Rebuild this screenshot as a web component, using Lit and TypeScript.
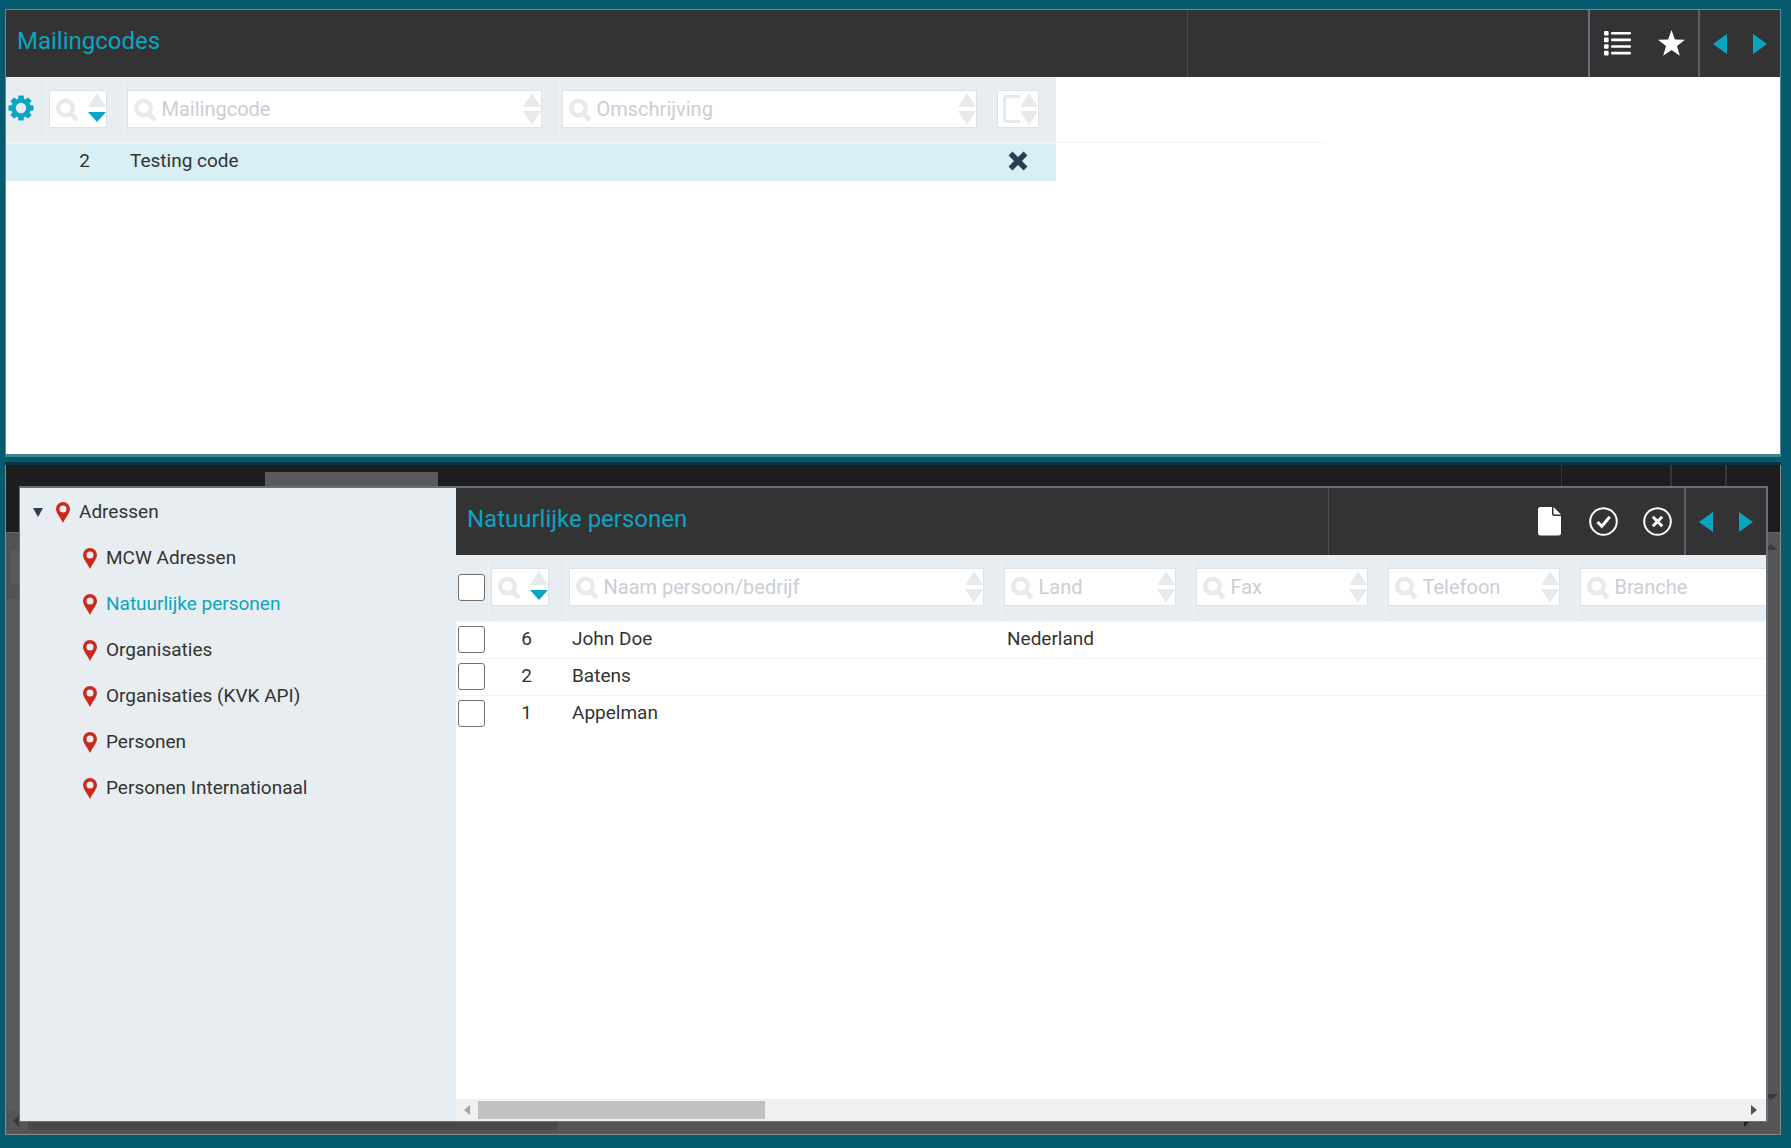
import { LitElement, html, css, svg, nothing } from "lit";
import { customElement, property } from "lit/decorators.js";
import { classMap } from "lit/directives/class-map.js";

const controls = css`
  * { box-sizing: border-box; }
  button { border: 0; padding: 0; margin: 0; background: none; font: inherit; color: inherit; cursor: pointer; display: grid; place-items: center; }
  svg { display: block; }
  input { font: inherit; }
`;

@customElement("column-filter")
class ColumnFilter extends LitElement {
  @property() label = "";
  @property() kind = "text";
  @property({ type: Boolean }) sorted = false;
  @property({ type: Boolean }) unnamed = false;

  static styles = [controls, css`
    :host { display: block; }
    .box { display: flex; height: 38px; border: 1px solid #dde2e6; background: #fff; overflow: hidden; }
    .glass { flex: none; width: 22px; margin: 7px 0 0 6px; }
    .field { flex: 1; min-width: 0; width: 0; height: 36px; border: 0; padding: 0 0 0 6px; outline: 0; background: none; color: #333; font-size: 20px; font-weight: 400; }
    .field::placeholder { color: #c9ced6; opacity: 1; }
    .arrows { flex: none; width: 18px; display: flex; flex-direction: column; gap: 4px; padding-top: 2px; }
    .tick { flex: 1; min-width: 0; display: flex; padding: 4px 0 0 5px; overflow: hidden; }
    .tick input { appearance: none; margin: 0; flex: none; width: 28px; height: 28px; border: 3px solid #e7e9eb; border-radius: 4px; }
  `];

  render() {
    const off = "#e7e9eb";
    return html`<div class="box">
      ${this.kind === "tick"
        ? html`<label class="tick"><input type="checkbox" aria-label=${this.label}></label>`
        : html`<svg class="glass" width="22" height="23" viewBox="0 0 22 23" fill="none" stroke=${off}>
            <circle cx="9.5" cy="10" r="7.3" stroke-width="4.4"/><path d="M15 16l6 6" stroke-width="5"/>
          </svg>
          <input class="field" type="text" aria-label=${this.label} placeholder=${this.unnamed ? nothing : this.label}>`}
      <span class="arrows">
        <button aria-label="Oplopend"><svg width="18" height="14" viewBox="0 0 18 14"><path d="M9 0l9 14H0z" fill=${off}/></svg></button>
        <button aria-label="Aflopend"><svg width="18" height="14" viewBox="0 0 18 14"><path d=${this.sorted ? "M0 1h18L9 11z" : "M0 0h18L9 14z"} fill=${this.sorted ? "#0aa5c3" : off}/></svg></button>
      </span>
    </div>`;
  }
}

const icons = {
  list: svg`<g fill="#fff">${[0, 1, 2, 3].map(i => svg`<rect x="1" y=${2 + i * 6.6} width="4.600" height="4.600" rx="1"/><rect x="8" y=${3 + i * 6.6} width="20" height="2.6" rx="1"/>`)}</g>`,
  star: svg`<path fill="#fff" d="M14.500 1l3.400 9.600 10.100.2-8 6.200 2.800 9.800-8.300-5.700-8.300 5.700 2.800-9.800-8-6.200 10.100-.2z"/>`,
  file: svg`<path fill="#fff" d="M5.500 0H17v6.500Q17 9 19.500 9H26v17q0 2.500-2.500 2.500h-18Q3 28.500 3 26V2.500Q3 0 5.500 0z"/><path fill="#fff" d="M18.500 0L26 7.500h-6q-1.500 0-1.500-1.500z"/>`,
  check: svg`<g fill="none" stroke="#fff"><circle cx="14.500" cy="14.500" r="13.300" stroke-width="2"/><path d="M8.500 15l4.300 4.300 8-9.500" stroke-width="3"/></g>`,
  cross: svg`<g fill="none" stroke="#fff"><circle cx="14.500" cy="14.500" r="13.300" stroke-width="2"/><path d="M9.800 9.800l9.400 9.400M19.200 9.800l-9.400 9.400" stroke-width="3"/></g>`,
};
type IconName = keyof typeof icons;

@customElement("title-bar")
class TitleBar extends LitElement {
  @property() heading = "";
  @property({ type: Array }) tools: [IconName, string][] = [];
  @property({ type: Boolean }) fenced = false;

  static styles = [controls, css`
    :host { display: block; }
    .bar { display: flex; height: 67px; background: #333; }
    h1 { flex: 1; margin: 0; padding: 15px 0 0 11px; font-size: 24px; line-height: 32px; font-weight: 400; color: #0aa5c3; }
    .side { flex: 0 0 33.4%; display: flex; justify-content: flex-end; border-left: 1px solid #4a4a4a; }
    .tools { display: flex; }
    .tools.fenced { border-left: 2px solid #667080; }
    .tools button { width: 54px; height: 67px; }
    .pager { display: flex; width: 82px; border-left: 2px solid #5a606a; }
    .pager button { flex: 1; height: 67px; }
  `];

  render() {
    return html`<header class="bar">
      <h1>${this.heading}</h1>
      <div class="side">
        <div class=${classMap({ tools: true, fenced: this.fenced })}>
          ${this.tools.map(([icon, label]) => html`<button aria-label=${label}><svg width="29" height="29" viewBox="0 0 29 29">${icons[icon]}</svg></button>`)}
        </div>
        <div class="pager">
          <button aria-label="Vorige"><svg width="14" height="20" viewBox="0 0 14 20"><path d="M14 0v20L0 10z" fill="#0aa5c3"/></svg></button>
          <button aria-label="Volgende"><svg width="14" height="20" viewBox="0 0 14 20"><path d="M0 0v20l14-10z" fill="#0aa5c3"/></svg></button>
        </div>
      </div>
    </header>`;
  }
}

const gear = html`<svg width="26" height="26" viewBox="0 0 26 26"><g fill="#0aa5c3">
  ${[0, 45, 90, 135].map(a => svg`<rect x="10.200" y="0.500" width="5.600" height="25" rx="1" transform="rotate(${a} 13 13)"/>`)}
  <circle cx="13" cy="13" r="9.800"/></g><circle cx="13" cy="13" r="5.200" fill="#e7edf0"/></svg>`;

const pin = html`<svg class="pin" width="14" height="21" viewBox="0 0 14 21"><path fill="#cb2a1b" fill-rule="evenodd" d="M7 0a7 7 0 0 1 7 7c0 4-4.500 8.500-7 14C4.500 15.500 0 11 0 7a7 7 0 0 1 7-7zm0 3.500a3.500 3.500 0 1 0 0 7 3.500 3.500 0 0 0 0-7z"/></svg>`;

const places = ["MCW Adressen", "Natuurlijke personen", "Organisaties", "Organisaties (KVK API)", "Personen", "Personen Internationaal"];
const people = [["6", "John Doe", "Nederland"], ["2", "Batens", ""], ["1", "Appelman", ""]];
const columns = ["Naam persoon/bedrijf", "Land", "Fax", "Telefoon", "Branche"];
const codeColumns = html`<colgroup><col class="c-pick"><col class="c-num"><col class="c-wide"><col class="c-wide"><col></colgroup>`;

@customElement("app-root")
class AppRoot extends LitElement {
  static styles = [controls, css`
    :host { display: flex; flex-direction: column; min-height: 100vh; padding: 9px 10px 13px 5px; box-sizing: border-box; background: #055a6e; color: #333; font: 19px/24px Roboto, "Liberation Sans", sans-serif; }
    .top { flex: 0 0 448px; border: 1px solid #5d8d99; border-bottom: 3px solid #3d8391; background: #fff; overflow: hidden; }
    table { border-collapse: collapse; table-layout: fixed; }
    th { height: 65px; padding: 0; background: #e7edf0; border-left: 1px solid #eef2f4; vertical-align: top; }
    th:first-child { border-left: 0; }
    th column-filter { margin: 13px 17px 0 2px; font-weight: 400; text-align: left; }
    td { height: 37px; padding: 0 0 2px 6px; border-top: 1px solid #f1f3f4; white-space: nowrap; }
    td.num { padding: 0 34px 2px 0; text-align: right; }
    .c-pick { width: 40px; }
    .c-num { width: 78px; }
    .c-wide { width: 435px; }
    .codes { width: 1050px; }
    .codes td { background: #d8eff5; border-color: #e9f4f6; }
    .codes th:last-child { border-left: 0; }
    .codes column-filter.last { margin-left: 3px; }
    .codeline { width: 1320px; border-bottom: 1px solid #f3f3f3; }
    .gear { margin: 18px 0 0 2px; }
    .codes td.x { padding-left: 14px; }
    .splitter { flex: none; height: 8px; background: #055a6e; border-bottom: 3px solid #0a3347; }
    .lower { flex: 1; display: grid; border: 1px solid #8a8a8a; border-top: 0; background: #5a5a5a; }
    .under, .dialog { grid-area: 1 / 1; min-width: 0; }
    .under { display: flex; flex-direction: column; }
    .underbar { display: flex; justify-content: space-between; height: 67px; padding: 7px 0 0 259px; background: #1d1d1d; }
    .tab { width: 173px; background: #5a5a5a; }
    .marks { display: flex; width: 219px; height: 61px; margin-top: -7px; border-left: 1px solid #333; }
    .marks i { width: 110px; border-right: 2px solid #33363c; }
    .marks i + i { width: 55px; }
    .underbody { flex: 1; display: flex; justify-content: space-between; border-top: 1px solid #666; }
    .underfilter { width: 14px; height: 66px; padding: 16px 0 0 4px; background: #515355; }
    .underfilter i { display: block; height: 36px; background: #5a5a5a; border: 1px solid #4f5052; }
    .rail { display: flex; flex-direction: column; justify-content: space-between; align-items: flex-start; padding: 11px 0 10px 5px; width: 21px; background: #565656; }
    .foot { display: flex; align-items: center; height: 24px; padding: 0 30px 3px 7px; background: #555; }
    .foot i { width: 530px; height: 18px; margin-left: 9px; margin-right: auto; background: #484848; }
    .dialog { display: flex; margin: 21px 12px 12px 13px; border: 2px solid #667080; border-width: 2px 2px 1px 1px; background: #fff; z-index: 1; }
    nav { flex: none; width: 436px; padding: 1px 0; background: #e7edf0; }
    ul { list-style: none; margin: 0; padding: 0; }
    nav a, .root { display: flex; align-items: center; height: 46px; gap: 9px; color: #333; text-decoration: none; }
    nav a { padding-left: 63px; }
    nav a.on { color: #0aa5c3; }
    .root { padding-left: 13px; }
    .root .pin { margin-left: 4px; }
    .main { flex: 1; min-width: 0; display: flex; flex-direction: column; }
    .scroll { flex: 1; overflow: hidden; }
    .persons { width: 1503px; }
    .persons .c-pick { width: 32px; }
    .c-mid { width: 192px; }
    .persons th { height: 66px; }
    .persons .pick { padding: 0 0 0 2px; text-align: left; vertical-align: middle; }
    .pick input { appearance: none; display: block; width: 27px; height: 27px; margin: 0; background: #fff; border: 1px solid #707070; border-radius: 3px; }
    .bar { display: flex; align-items: center; height: 22px; padding: 0 9px 0 8px; background: #f0f0f0; }
    .thumb { width: 22.2%; height: 18px; margin: 0 auto 0 8px; background: #c1c1c1; }
  `];

  render() {
    return html`
      <section class="top">
        <title-bar heading="Mailingcodes" fenced .tools=${[["list", "Lijst"], ["star", "Favoriet"]]}></title-bar>
        <div class="codeline">
          <table class="codes">
            ${codeColumns}
            <thead><tr>
              <th><button class="gear" aria-label="Instellingen">${gear}</button></th>
              <th><column-filter label="Nummer" unnamed sorted></column-filter></th>
              <th><column-filter label="Mailingcode"></column-filter></th>
              <th><column-filter label="Omschrijving"></column-filter></th>
              <th><column-filter class="last" kind="tick" label="Actief"></column-filter></th>
            </tr></thead>
          </table>
        </div>
        <table class="codes">
          ${codeColumns}
          <tbody><tr><td></td><td class="num">2</td><td>Testing code</td><td></td>
            <td class="x"><svg width="20" height="20" viewBox="0 0 20 20" stroke="#2c3d55" stroke-width="5.500"><path d="M2.500 2.500l15 15M17.500 2.500l-15 15"/></svg></td></tr></tbody>
        </table>
      </section>
      <div class="splitter"></div>
      <section class="lower">
        <div class="under">
          <div class="underbar"><div class="tab"></div><div class="marks"><i></i><i></i></div></div>
          <div class="underbody">
            <div class="underfilter"><i></i></div>
            <div class="rail">
              <svg width="14" height="6"><path d="M0 6h14L7 0z" fill="#3a3a3a"/></svg>
              <svg width="14" height="6"><path d="M0 0h14L7 6z" fill="#3a3a3a"/></svg>
            </div>
          </div>
          <div class="foot"><svg width="6" height="12"><path d="M6 0v12L0 6z" fill="#3a3a3a"/></svg><i></i><svg width="6" height="12"><path d="M0 0v12l6-6z" fill="#222"/></svg></div>
        </div>
        <div class="dialog" role="dialog" aria-label="Natuurlijke personen">
          <nav>
            <div class="root"><button aria-label="Inklappen"><svg width="10" height="9"><path d="M0 0h10L5 9z" fill="#2c3d55"/></svg></button>${pin}<span>Adressen</span></div>
            <ul>${places.map(p => html`<li><a href="#" class=${classMap({ on: p === "Natuurlijke personen" })}>${pin}<span>${p}</span></a></li>`)}</ul>
          </nav>
          <div class="main">
            <title-bar heading="Natuurlijke personen" .tools=${[["file", "Nieuw"], ["check", "Akkoord"], ["cross", "Annuleren"]]}></title-bar>
            <div class="scroll">
              <table class="persons">
                <colgroup><col class="c-pick"><col class="c-num"><col class="c-wide"><col class="c-mid"><col class="c-mid"><col class="c-mid"><col></colgroup>
                <thead><tr>
                  <th class="pick"><input type="checkbox" aria-label="Alles selecteren"></th>
                  <th><column-filter label="Nummer" unnamed sorted></column-filter></th>
                  ${columns.map(c => html`<th><column-filter label=${c}></column-filter></th>`)}
                </tr></thead>
                <tbody>${people.map(([n, name, land]) => html`<tr>
                  <td class="pick"><input type="checkbox" aria-label=${name}></td>
                  <td class="num">${n}</td><td>${name}</td><td>${land}</td><td></td><td></td><td></td></tr>`)}</tbody>
              </table>
            </div>
            <div class="bar"><svg width="6" height="10"><path d="M6 0v10L0 5z" fill="#a3a3a3"/></svg><div class="thumb"></div><svg width="6" height="10"><path d="M0 0v10l6-5z" fill="#505050"/></svg></div>
          </div>
        </div>
      </section>`;
  }
}
